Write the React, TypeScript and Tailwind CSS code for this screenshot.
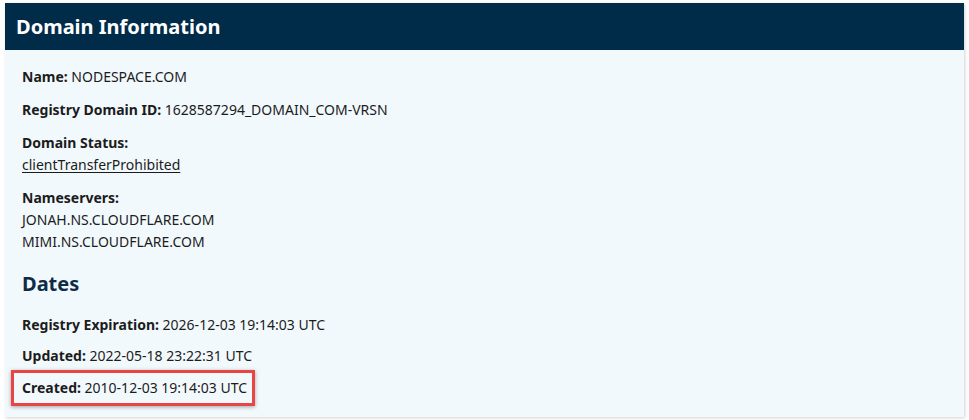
import React from 'react';

type Field = { label: string; value: string };

const font = { fontFamily: '"Noto Sans", "Open Sans", sans-serif' };

const topFields: Field[] = [
  { label: 'Name', value: 'NODESPACE.COM' },
  { label: 'Registry Domain ID', value: '1628587294_DOMAIN_COM-VRSN' },
];

export default function App() {
  return (
    <div className="min-h-[420px] bg-white pt-[3px] pl-[5px]" style={font}>
      <section className="w-[959px] bg-[#f2f9fd] shadow-[1px_1px_3px_rgba(0,0,0,0.18)]">
        <header className="flex h-[47px] items-center bg-[#002c4a] px-[11px]">
          <h1 className="text-[20px] leading-7 font-bold text-white">Domain Information</h1>
        </header>

        <div className="px-[17px] pt-[16px] pb-[11px] text-[14px] leading-[22px] text-[#1c1c1c]">
          {topFields.map((f) => (
            <p key={f.label} className="mb-[11px]">
              <span className="font-bold">{f.label}:</span> {f.value}
            </p>
          ))}

          <div className="mb-[11px]">
            <p className="font-bold">Domain Status:</p>
            <a href="#" className="underline underline-offset-2">
              clientTransferProhibited
            </a>
          </div>

          <div>
            <p className="font-bold">Nameservers:</p>
            <p>JONAH.NS.CLOUDFLARE.COM</p>
            <p>MIMI.NS.CLOUDFLARE.COM</p>
          </div>

          <h2 className="mt-[17px] mb-[16px] text-[20px] leading-7 font-bold text-[#0e2c47]">Dates</h2>

          <p className="mb-[9px]">
            <span className="font-bold">Registry Expiration:</span> 2026-12-03 19:14:03 UTC
          </p>
          <p className="mb-[3px]">
            <span className="font-bold">Updated:</span> 2022-05-18 23:22:31 UTC
          </p>
          <div className="-ml-[11px] inline-block border-[3px] border-[#e94545] py-[4px] pr-[5px] pl-[8px] shadow-[0_1px_4px_rgba(0,0,0,0.35)]">
            <span className="font-bold">Created:</span> 2010-12-03 19:14:03 UTC
          </div>
        </div>
      </section>
    </div>
  );
}
